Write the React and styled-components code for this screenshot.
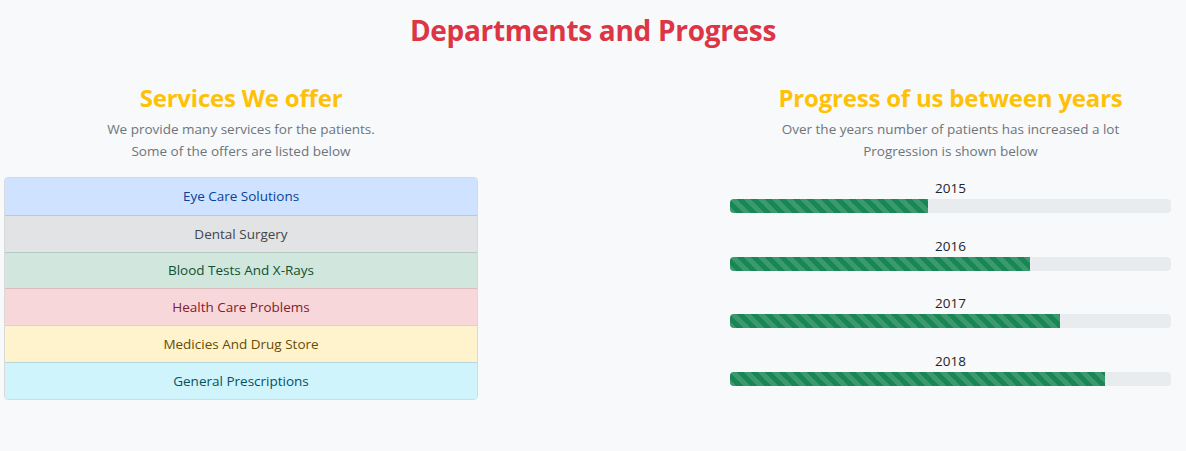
import React from "react";
import styled, { createGlobalStyle } from "styled-components";

const Global = createGlobalStyle`
  html, body { margin: 0; padding: 0; background: #f8f9fa; }
  body { font-family: "Open Sans", "Noto Sans", "Liberation Sans", sans-serif; color: #212529; }
  * { box-sizing: border-box; }
`;

const Page = styled.main`
  padding-top: 11px;
`;

const Title = styled.h1`
  margin: 0;
  text-align: center;
  font-size: 28px;
  line-height: 38px;
  font-weight: 700;
  color: #dc3545;
  letter-spacing: -0.3px;
`;

const Row = styled.section`
  display: flex;
  justify-content: space-between;
  padding: 0 15px 0 4px;
  margin-top: 34px;
`;

const Column = styled.div`
  width: ${(p) => p.$w}px;
  display: flex;
  flex-direction: column;
  align-items: stretch;
`;

const Heading = styled.h2`
  margin: 0;
  text-align: center;
  font-size: 24px;
  line-height: 29px;
  font-weight: 700;
  color: #ffc107;
  letter-spacing: -0.2px;
  white-space: nowrap;
`;

const Lead = styled.p`
  margin: 6px 0 0;
  text-align: center;
  font-size: 13.5px;
  line-height: 22px;
  color: #6c757d;
`;

const List = styled.ul`
  list-style: none;
  margin: 15px 0 0;
  padding: 0;
  border-radius: 4px;
  overflow: hidden;
  border: 1px solid rgba(0, 0, 0, 0.125);
`;

const Item = styled.li`
  height: 36.8px;
  display: flex;
  align-items: center;
  justify-content: center;
  font-size: 13.5px;
  background: ${(p) => p.$bg};
  color: ${(p) => p.$fg};
  & + & { border-top: 1px solid rgba(0, 0, 0, 0.125); }
`;

const Progresses = styled.div`
  margin-top: 15px;
  display: flex;
  flex-direction: column;
  gap: 21.5px;
`;

const Year = styled.div`
  text-align: center;
  font-size: 13.5px;
  line-height: 22px;
  color: #212529;
`;

const Track = styled.div`
  height: 14px;
  border-radius: 4px;
  background: #e9ecef;
  overflow: hidden;
  display: flex;
`;

const Bar = styled.div`
  height: 100%;
  background-color: #198754;
  background-image: linear-gradient(
    45deg,
    rgba(255, 255, 255, 0.15) 25%,
    transparent 25%,
    transparent 50%,
    rgba(255, 255, 255, 0.15) 50%,
    rgba(255, 255, 255, 0.15) 75%,
    transparent 75%,
    transparent
  );
  background-size: 14px 14px;
`;

const services = [
  ["Eye Care Solutions", "#cfe2ff", "#084298"],
  ["Dental Surgery", "#e2e3e5", "#41464b"],
  ["Blood Tests And X-Rays", "#d1e7dd", "#0f5132"],
  ["Health Care Problems", "#f8d7da", "#842029"],
  ["Medicies And Drug Store", "#fff3cd", "#664d03"],
  ["General Prescriptions", "#cff4fc", "#055160"],
];

const years = [
  ["2015", 45],
  ["2016", 68],
  ["2017", 74.8],
  ["2018", 85],
];

export default function App() {
  return (
    <Page>
      <Global />
      <Title>Departments and Progress</Title>
      <Row>
        <Column $w={474}>
          <Heading>Services We offer</Heading>
          <Lead>
            We provide many services for the patients.
            <br />
            Some of the offers are listed below
          </Lead>
          <List>
            {services.map(([t, bg, fg]) => (
              <Item key={t} $bg={bg} $fg={fg}>
                {t}
              </Item>
            ))}
          </List>
        </Column>
        <Column $w={441}>
          <Heading>Progress of us between years</Heading>
          <Lead>
            Over the years number of patients has increased a lot
            <br />
            Progression is shown below
          </Lead>
          <Progresses>
            {years.map(([y, v]) => (
              <div key={y}>
                <Year>{y}</Year>
                <Track>
                  <Bar style={{ width: `${v}%` }} />
                </Track>
              </div>
            ))}
          </Progresses>
        </Column>
      </Row>
    </Page>
  );
}
